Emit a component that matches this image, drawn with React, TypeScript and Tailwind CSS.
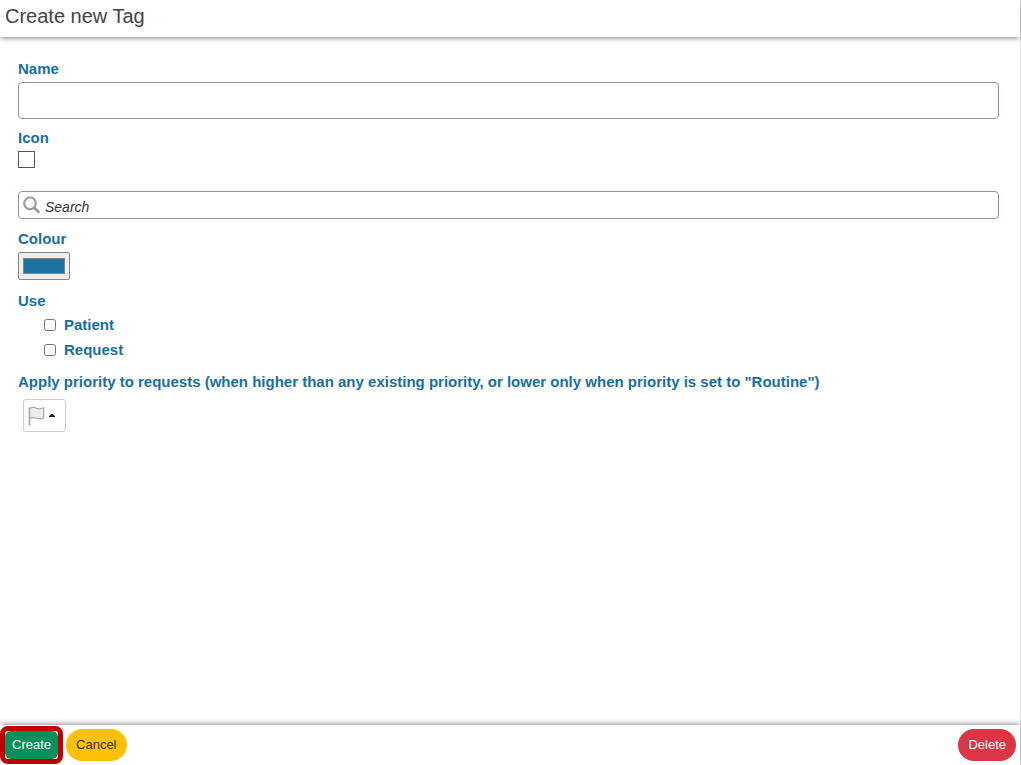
import { useState } from 'react';

const label = 'block w-fit text-[15px] leading-5 font-bold text-[#176f9e]';
const pill = 'h-8 rounded-full px-[10px] text-[13px]';

function SearchIcon() {
  return (
    <svg className="h-[18px] w-[18px] shrink-0" viewBox="0 0 18 18" fill="none" stroke="#999" aria-hidden="true">
      <circle cx="7" cy="7.400" r="5.800" strokeWidth="2" />
      <path d="M11.400 12 15.400 15.800" strokeWidth="2.800" strokeLinecap="round" />
    </svg>
  );
}

function FlagIcon() {
  return (
    <svg className="h-5 w-[18px]" viewBox="0 0 18 20" fill="none" stroke="#a8a8a8" aria-hidden="true">
      <path d="M1.500 2.600C4 .8 6 .9 8.500 2.200c2.500 1.200 4.500.8 7.200-.4v10c-2.700 1.500-4.700 1.500-7.200.5-2.500-1-4.500-.8-7 .5z" fill="#eee" strokeWidth="1.200" />
      <path d="M1.500 1.500v18" strokeWidth="1.600" />
    </svg>
  );
}

export default function App() {
  const [name, setName] = useState('');
  const [search, setSearch] = useState('');
  const [colour, setColour] = useState('#1c72a2');

  return (
    <form
      className="flex min-h-screen flex-col border-r border-[#dedede] bg-white font-['Liberation_Sans',Arial,sans-serif]"
      onSubmit={(e) => e.preventDefault()}
    >
      <header className="h-[37px] px-[5px] pt-1 shadow-[0_2px_5px_-1px_rgba(0,0,0,0.5)]">
        <h1 className="text-xl leading-6 text-[#444]">Create new Tag</h1>
      </header>

      <main className="flex-1 pt-[22px] pr-[21px] pl-[18px]">
        <label htmlFor="name" className={label}>Name</label>
        <input
          id="name"
          value={name}
          onChange={(e) => setName(e.target.value)}
          className="mt-[3px] block h-[37px] w-full rounded border border-[#8f94ad] px-2 text-[15px]"
        />

        <label htmlFor="icon" className={`${label} mt-[9px]`}>Icon</label>
        <button id="icon" type="button" className="mt-[3px] block h-[17px] w-[17px] border border-[#555]" />

        <div className="mt-[23px] flex h-7 items-center gap-1 rounded border border-[#8f94ad] px-1">
          <SearchIcon />
          <input
            type="search"
            aria-label="Search"
            placeholder="Search"
            value={search}
            onChange={(e) => setSearch(e.target.value)}
            className="h-full min-w-0 flex-1 pt-1 text-sm italic outline-none placeholder:text-[#333]"
          />
        </div>

        <label htmlFor="colour" className={`${label} mt-[10px]`}>Colour</label>
        <input
          id="colour"
          type="color"
          value={colour}
          onChange={(e) => setColour(e.target.value)}
          className="mt-[3px] block h-7 w-[52px] appearance-none rounded-[2px] border border-[#858585] bg-[#efefef] px-1 py-[5px] [&::-webkit-color-swatch]:border-[#858585] [&::-webkit-color-swatch-wrapper]:p-0"
        />

        <fieldset className="mt-[11px]">
          <legend className={label}>Use</legend>
          <div className="mt-1 flex flex-col gap-[5px] pl-[26px]">
            <div className="flex items-center gap-2">
              <input id="patient" type="checkbox" className="h-3 w-3" />
              <label htmlFor="patient" className={label}>Patient</label>
            </div>
            <div className="flex items-center gap-2">
              <input id="request" type="checkbox" className="h-3 w-3" />
              <label htmlFor="request" className={label}>Request</label>
            </div>
          </div>
        </fieldset>

        <label htmlFor="priority" className={`${label} mt-3`}>
          Apply priority to requests (when higher than any existing priority, or lower only when priority is set to "Routine")
        </label>
        <button
          id="priority"
          type="button"
          className="mt-[7px] ml-[5px] flex h-[33px] w-[43px] items-center gap-[3px] rounded-[3px] border border-[#ccc] pl-1"
        >
          <FlagIcon />
          <svg className="h-[3px] w-[6px]" viewBox="0 0 6 3" fill="#222" aria-hidden="true">
            <path d="M0 3V2.200L2.200 0h1.600L6 2.200V3z" />
          </svg>
        </button>
      </main>

      <footer className="flex h-10 items-center gap-[3px] pr-1 shadow-[0_-2px_5px_-1px_rgba(0,0,0,0.45)]">
        <div className="-my-px rounded-lg border-[5px] border-[#c00000] bg-white">
          <button type="submit" className="block h-7 rounded-md bg-[#08905a] px-[7px] text-[13px] text-white">Create</button>
        </div>
        <button type="button" className={`${pill} bg-[#ffc107] text-[#333]`}>Cancel</button>
        <button type="button" className={`${pill} ml-auto bg-[#dc3545] text-white`}>Delete</button>
      </footer>
    </form>
  );
}
